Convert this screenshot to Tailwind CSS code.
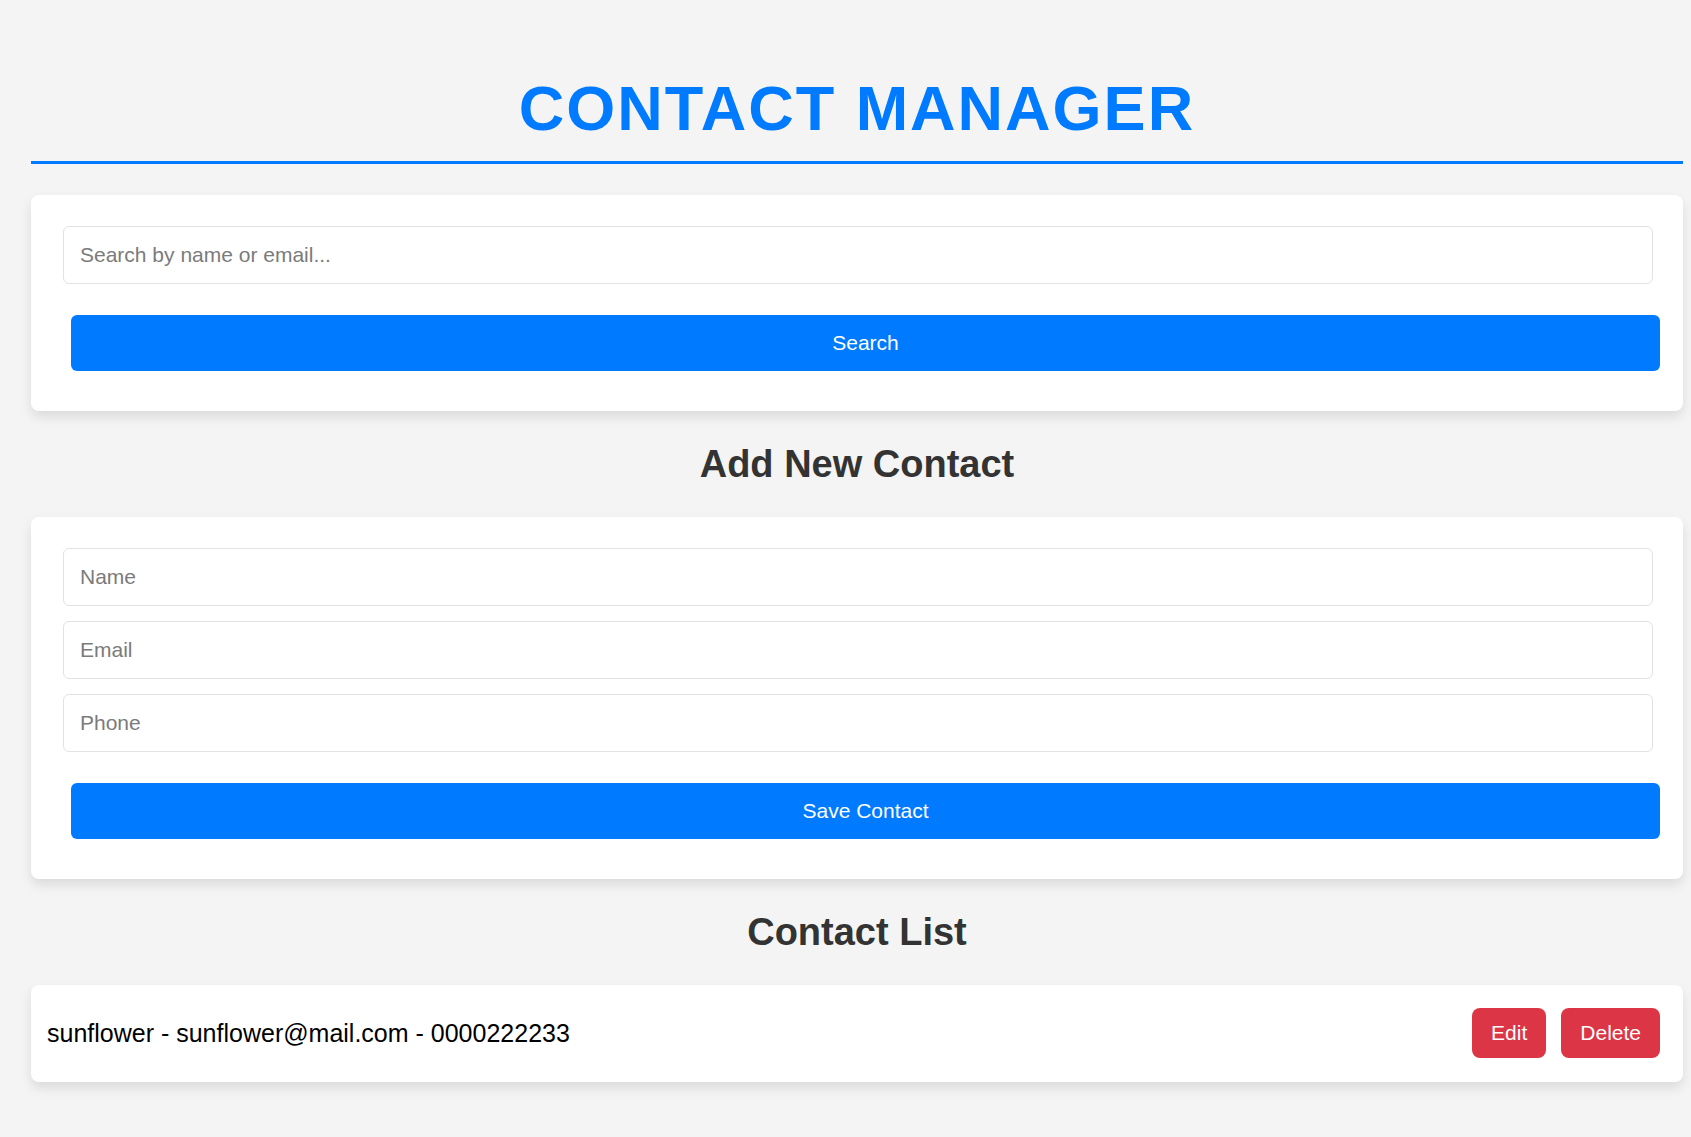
<!DOCTYPE html>
<html lang="en">
<head>
<meta charset="UTF-8">
<meta name="viewport" content="width=device-width, initial-scale=1">
<title>Contact Manager</title>
<script src="https://cdn.jsdelivr.net/npm/@tailwindcss/browser@4"></script>
</head>
<body class="min-h-screen bg-[#f4f4f4] pt-[70px] pr-2 pb-8 pl-[31px] font-['Liberation_Sans',Arial,sans-serif] text-[21px] leading-6 text-black">
  <header class="border-b-3 border-[#007bff] pb-[15px] text-center">
    <h1 class="text-[63px] leading-[76px] font-bold tracking-[2px] text-[#007bff] uppercase">Contact Manager</h1>
  </header>

  <main>
    <form class="mt-[31px] flex flex-col rounded-lg bg-white pt-[31px] pr-[30px] pb-10 pl-8 shadow-[0_6px_12px_rgba(0,0,0,0.1)]">
      <input type="search" aria-label="Search contacts" placeholder="Search by name or email..." class="h-[58px] w-full rounded-md border border-[#e2e2e2] bg-white px-4 placeholder:text-[#7b7b7b]">
      <button type="button" class="mt-[31px] -mr-[7px] ml-2 h-14 rounded-md bg-[#007bff] text-white">Search</button>
    </form>

    <h2 class="py-[31px] text-center text-[38px] leading-[44px] font-bold text-[#333]">Add New Contact</h2>

    <form class="flex flex-col rounded-lg bg-white pt-[31px] pr-[30px] pb-10 pl-8 shadow-[0_6px_12px_rgba(0,0,0,0.1)]">
      <div class="flex flex-col gap-[15px]">
        <input type="text" aria-label="Name" placeholder="Name" class="h-[58px] w-full rounded-md border border-[#e2e2e2] bg-white px-4 placeholder:text-[#7b7b7b]">
        <input type="email" aria-label="Email" placeholder="Email" class="h-[58px] w-full rounded-md border border-[#e2e2e2] bg-white px-4 placeholder:text-[#7b7b7b]">
        <input type="tel" aria-label="Phone" placeholder="Phone" class="h-[58px] w-full rounded-md border border-[#e2e2e2] bg-white px-4 placeholder:text-[#7b7b7b]">
      </div>
      <button type="button" class="mt-[31px] -mr-[7px] ml-2 h-14 rounded-md bg-[#007bff] text-white">Save Contact</button>
    </form>

    <h2 class="py-[31px] text-center text-[38px] leading-[44px] font-bold text-[#333]">Contact List</h2>

    <ul>
      <li class="flex items-center justify-between rounded-lg bg-white pt-[23px] pr-[23px] pb-6 pl-4 shadow-[0_6px_12px_rgba(0,0,0,0.1)]">
        <span class="text-[25px] leading-7">sunflower - sunflower@mail.com - 0000222233</span>
        <div class="flex gap-[15px]">
          <button type="button" class="h-[50px] rounded-lg bg-[#dc3545] px-[19px] text-white">Edit</button>
          <button type="button" class="h-[50px] rounded-lg bg-[#dc3545] px-[19px] text-white">Delete</button>
        </div>
      </li>
    </ul>
  </main>
</body>
</html>
